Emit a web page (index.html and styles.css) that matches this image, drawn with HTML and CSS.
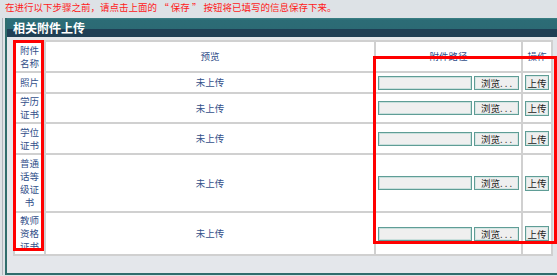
FILE: index.html
```html
<!DOCTYPE html>
<html lang="zh-CN">
<head>
  <meta charset="UTF-8">
  <title>相关附件上传</title>
  <link rel="stylesheet" href="styles.css">
</head>
<body>
  <p class="notice">在进行以下步骤之前，请点击上面的 “ 保存 ” 按钮将已填写的信息保存下来。</p>

  <div class="frame">
    <div class="panel">
      <h2 class="panel-title">相关附件上传</h2>
      <div class="panel-body">
        <div class="sheet">
          <table class="files">
            <colgroup>
              <col class="c-name">
              <col class="c-view">
              <col class="c-path">
              <col class="c-op">
            </colgroup>
            <tr class="r-head">
              <th class="name">附件名称</th>
              <th>预览</th>
              <th>附件路径</th>
              <th>操作</th>
            </tr>
            <tr class="r-1">
              <td class="name">照片</td>
              <td>未上传</td>
              <td><div class="file"><input class="path" type="text"><button class="browse">浏览. . .</button></div></td>
              <td><button class="upload">上传</button></td>
            </tr>
            <tr class="r-2">
              <td class="name">学历证书</td>
              <td>未上传</td>
              <td><div class="file"><input class="path" type="text"><button class="browse">浏览. . .</button></div></td>
              <td><button class="upload">上传</button></td>
            </tr>
            <tr class="r-3">
              <td class="name">学位证书</td>
              <td>未上传</td>
              <td><div class="file"><input class="path" type="text"><button class="browse">浏览. . .</button></div></td>
              <td><button class="upload">上传</button></td>
            </tr>
            <tr class="r-4">
              <td class="name">普通话等级证书</td>
              <td>未上传</td>
              <td><div class="file"><input class="path" type="text"><button class="browse">浏览. . .</button></div></td>
              <td><button class="upload">上传</button></td>
            </tr>
            <tr class="r-5">
              <td class="name">教师资格证书</td>
              <td>未上传</td>
              <td><div class="file"><input class="path" type="text"><button class="browse">浏览. . .</button></div></td>
              <td><button class="upload">上传</button></td>
            </tr>
          </table>

          <!-- annotation boxes -->
          <div class="mark mark-name"></div>
          <div class="mark mark-path"></div>
        </div>
      </div>
    </div>
  </div>
</body>
</html>
```

FILE: styles.css
```css
html, body {
  overflow: hidden;
}
body {
  margin: 0;
  background-color: #dde2e6;
  font-family: "Noto Sans CJK SC", "Liberation Sans", sans-serif;
  font-size: 9.5px;
}
.notice {
  margin: 0;
  height: 18px;
  padding-left: 5px;
  line-height: 15px;
  color: #ff1a1a;
}
.frame {
  margin-left: 2px;
  width: 570px;
  border-left: 1px solid #b0b7bd;
  padding-left: 2px;
}
.panel {
  border-left: 2px solid #2f6d6c;
  border-bottom: 2px solid #2f6d6c;
  background-color: #e4e7eb;
}
.panel-title {
  margin: 0;
  height: 19px;
  padding-left: 6px;
  line-height: 19px;
  font-size: 12px;
  font-weight: bold;
  color: #fff;
  background: linear-gradient(#3b8286 0, #2c6c76 10%, #2c6a74 58%, #1f3f55 58%, #1f3f55 100%);
}
.panel-body {
  padding: 3px 0 17px 6px;
}
.sheet {
  position: relative;
  width: 538px;
}
.files {
  width: 538px;
  table-layout: fixed;
  border-collapse: collapse;
  background-color: #fff;
  border: 2px solid #cfcfcf;
}
.c-name { width: 31px; }
.c-view { width: 330px; }
.c-path { width: 147px; }
.c-op { width: 30px; }
.r-head { height: 31px; }
.r-1 { height: 21px; }
.r-2 { height: 30px; }
.r-3 { height: 31px; }
.r-4 { height: 58px; }
.r-5 { height: 43px; }
.files th,
.files td {
  border: 2px solid #d0d0d0;
  padding: 0 2px;
  line-height: 13px;
  text-align: center;
  font-weight: normal;
  color: #32508a;
}
.files .name {
  padding: 0 3px;
}
.file {
  display: flex;
  gap: 2px;
}
.path {
  box-sizing: border-box;
  width: 94px;
  height: 14px;
  margin: 0;
  border: 1px solid #5f9d96;
  box-shadow: inset 0 0 0 1px #c9dfdc;
  background-color: #efefef;
}
.browse,
.upload {
  box-sizing: border-box;
  height: 14px;
  margin: 0;
  padding: 0;
  border: 1px solid #5f9d96;
  box-shadow: inset 0 0 0 1px #d6e6e4;
  background-color: #efefef;
  font-family: "Noto Sans CJK SC", sans-serif;
  font-size: 9.5px;
  line-height: 12px;
  color: #222;
}
.browse {
  width: 45px;
}
.upload {
  width: 24px;
  height: 15px;
  vertical-align: middle;
}
.mark {
  position: absolute;
  box-sizing: border-box;
  border: 3px solid #ff0000;
}
.mark-name {
  left: 0;
  top: 0;
  width: 31px;
  height: 211px;
}
.mark-path {
  left: 360px;
  top: 16px;
  width: 184px;
  height: 188px;
}
```
